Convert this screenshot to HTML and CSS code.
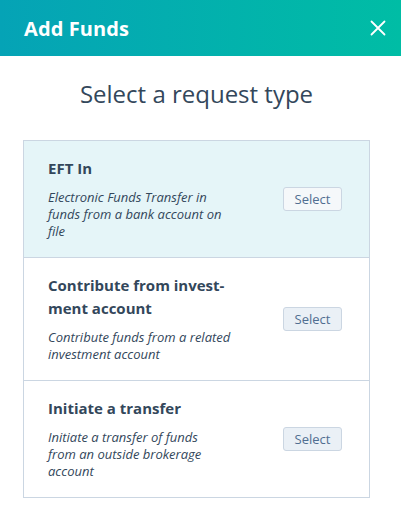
FILE: index.html
```html
<!DOCTYPE html>
<html lang="en">
<head>
<meta charset="utf-8">
<link rel="stylesheet" href="styles.css">
</head>
<body>
<div class="modal">
  <header class="header">
    <h1 class="title">Add Funds</h1>
    <button class="close" aria-label="Close">
      <svg width="16" height="16" viewBox="0 0 16 16"><path d="M1.5 1.5L14.5 14.5M14.5 1.5L1.5 14.5" stroke="#fff" stroke-width="1.8" stroke-linecap="round"/></svg>
    </button>
  </header>
  <main class="body">
    <h2 class="heading">Select a request type</h2>
    <div class="list">
      <div class="row row-active">
        <div class="text">
          <div class="row-title">EFT In</div>
          <div class="row-desc">Electronic Funds Transfer in<br>funds from a bank account on<br>file</div>
        </div>
        <button class="select">Select</button>
      </div>
      <div class="row">
        <div class="text">
          <div class="row-title">Contribute from invest&shy;ment account</div>
          <div class="row-desc">Contribute funds from a related<br>investment account</div>
        </div>
        <button class="select">Select</button>
      </div>
      <div class="row">
        <div class="text">
          <div class="row-title">Initiate a transfer</div>
          <div class="row-desc">Initiate a transfer of funds<br>from an outside brokerage<br>account</div>
        </div>
        <button class="select">Select</button>
      </div>
    </div>
  </main>
</div>
</body>
</html>
```

FILE: styles.css
```css
* { box-sizing: border-box; }
html, body { margin: 0; padding: 0; background: #fff; }
body { font-family: "Open Sans", "Noto Sans", sans-serif; color: #33475b; }
.modal { width: 401px; }
.header {
  height: 56px;
  background: linear-gradient(90deg, #05a3b6 0%, #00bda5 100%);
  display: flex;
  align-items: center;
  justify-content: space-between;
  padding: 0 15px 0 24px;
}
.title { margin: 0; font-size: 20px; font-weight: 700; color: #fff; letter-spacing: 0.1px; }
.close { background: none; border: 0; padding: 0; width: 16px; height: 16px; display: flex; cursor: pointer; }
.body { padding: 21px 32px 0 23px; }
.heading {
  margin: 0 0 29px 0;
  font-size: 24px;
  font-weight: 400;
  text-align: center;
  padding-left: 1px;
  color: #33475b;
  line-height: 34px;
}
.list { border: 1px solid #cbd6e2; width: 347px; }
.row {
  display: flex;
  align-items: center;
  padding: 16px 27px 17px 24px;
  border-top: 1px solid #cbd6e2;
}
.row:first-child { border-top: 0; }
.row-active { background: #e5f5f8; }
.text { width: 190px; flex: none; }
.row-title { font-size: 15px; font-weight: 700; line-height: 23px; margin-bottom: 9px; color: #33475b; }
.row-desc { font-size: 13px; font-style: italic; line-height: 17px; color: #33475b; white-space: nowrap; }
.select {
  margin-left: auto;
  width: 59px;
  height: 24px;
  border: 1px solid #cbd6e2;
  border-radius: 3px;
  background: #eaf0f6;
  color: #506e91;
  font-family: inherit;
  font-size: 13px;
  padding: 0;
}
.row-active .select { background: #f5f8fa; }
```
